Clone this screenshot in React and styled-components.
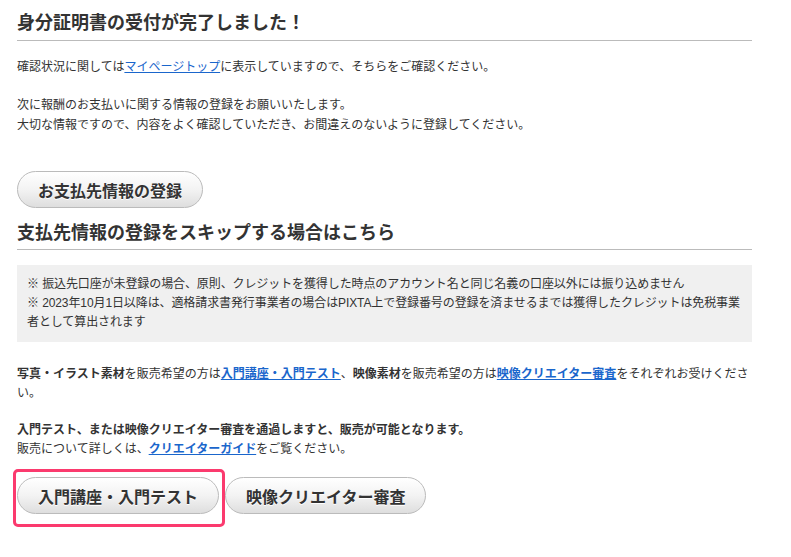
import React from 'react';
import styled, { createGlobalStyle } from 'styled-components';

const GlobalStyle = createGlobalStyle`
    body {
        margin: 0;
        background: #fff;
        color: #333;
        font-family: "Noto Sans CJK JP", "Noto Sans", sans-serif;
    }
`;

const Page = styled.div`
    width: 735px;
    padding: 0 17px 20px;
`;

const Heading = styled.h2`
    margin: 0;
    padding: ${(p) => p.$top || 8}px 0 ${(p) => p.$bottom || 6}px;
    font-size: 18px;
    line-height: 26px;
    font-weight: bold;
    color: #333;
    border-bottom: 1px solid #bbb;
`;

const Text = styled.p`
    margin: ${(p) => p.$top || 0}px 0 0;
    font-size: 12px;
    line-height: ${(p) => p.$lh || 20}px;
    color: #333;

    b {
        font-weight: bold;
    }
`;

const Link = styled.a`
    color: #1a66cc;
    text-decoration: underline;
    font-weight: ${(p) => (p.$bold ? 'bold' : 'normal')};
`;

const Notice = styled.div`
    margin-top: 15px;
    padding: 10px 5px 10px 10px;
    background: #f0f0f0;
    font-family: "Liberation Sans", "Noto Sans CJK JP", sans-serif;
    font-size: 12px;
    line-height: 19px;
    letter-spacing: -0.1px;
    color: #333;
`;

const ButtonRow = styled.div`
    position: relative;
    display: flex;
    gap: 6px;
    margin-top: ${(p) => p.$top || 0}px;
`;

const PillButton = styled.button`
    height: 37px;
    padding: 0 20px;
    border: 1px solid #bbb;
    border-radius: 19px;
    background: linear-gradient(to bottom, #ffffff 0%, #f3f3f3 50%, #dedede 100%);
    font-family: inherit;
    font-size: 16px;
    font-weight: bold;
    color: #333;
    text-shadow: 0 1px 0 #fff;
    cursor: pointer;
`;

const Highlight = styled.div`
    position: absolute;
    left: -4px;
    top: -8px;
    width: 206px;
    height: 52px;
    border: 3px solid #fb3a6e;
    border-radius: 5px;
    pointer-events: none;
`;

export default function App() {
    return (
        <Page>
            <GlobalStyle />
            <Heading>身分証明書の受付が完了しました！</Heading>
            <Text $top={15}>
                確認状況に関しては<Link href="#">マイページトップ</Link>に表示していますので、そちらをご確認ください。
            </Text>
            <Text $top={18}>
                次に報酬のお支払いに関する情報の登録をお願いいたします。<br />
                大切な情報ですので、内容をよく確認していただき、お間違えのないように登録してください。
            </Text>
            <ButtonRow $top={37}>
                <PillButton>お支払先情報の登録</PillButton>
            </ButtonRow>
            <Heading $top={10} $bottom={5}>支払先情報の登録をスキップする場合はこちら</Heading>
            <Notice>
                ※ 振込先口座が未登録の場合、原則、クレジットを獲得した時点のアカウント名と同じ名義の口座以外には振り込めません<br />
                ※ 2023年10月1日以降は、適格請求書発行事業者の場合はPIXTA上で登録番号の登録を済ませるまでは獲得したクレジットは免税事業者として算出されます
            </Notice>
            <Text $top={21} $lh={19}>
                <b>写真・イラスト素材</b>を販売希望の方は<Link href="#" $bold>入門講座・入門テスト</Link>、<b>映像素材</b>を販売希望の方は<Link href="#" $bold>映像クリエイター審査</Link>をそれぞれお受けください。
            </Text>
            <Text $top={18} $lh={19}>
                <b>入門テスト、または映像クリエイター審査を通過しますと、販売が可能となります。</b><br />
                販売について詳しくは、<Link href="#" $bold>クリエイターガイド</Link>をご覧ください。
            </Text>
            <ButtonRow $top={20}>
                <PillButton>入門講座・入門テスト</PillButton>
                <PillButton>映像クリエイター審査</PillButton>
                <Highlight />
            </ButtonRow>
        </Page>
    );
}
